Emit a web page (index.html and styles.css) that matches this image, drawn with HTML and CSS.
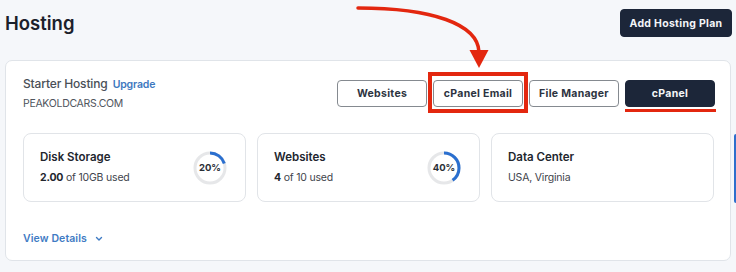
FILE: index.html
```html
<!DOCTYPE html>
<html lang="en">
<head>
<meta charset="utf-8">
<title>Hosting</title>
<link rel="stylesheet" href="styles.css">
</head>
<body>
<div class="page">
  <header class="header">
    <h1 class="title">Hosting</h1>
    <button class="btn btn-dark btn-add">Add Hosting Plan</button>
  </header>

  <section class="plan">
    <div class="plan-top">
      <div class="plan-info">
        <div class="plan-name">Starter Hosting <a class="upgrade" href="#">Upgrade</a></div>
        <div class="plan-domain">PEAKOLDCARS.COM</div>
      </div>
      <div class="actions">
        <button class="btn btn-outline">Websites</button>
        <button class="btn btn-outline highlighted">cPanel Email</button>
        <button class="btn btn-outline">File Manager</button>
        <button class="btn btn-dark underlined">cPanel</button>
      </div>
    </div>

    <div class="stats">
      <div class="stat">
        <div class="stat-text">
          <div class="stat-title">Disk Storage</div>
          <div class="stat-sub"><b>2.00</b> of 10GB used</div>
        </div>
        <div class="ring">
          <svg width="34" height="34" viewBox="0 0 34 34">
            <circle cx="17" cy="17" r="15" fill="none" stroke="#e6e7e9" stroke-width="3"/>
            <circle cx="17" cy="17" r="15" fill="none" stroke="#2a6fcf" stroke-width="3" stroke-dasharray="18.85 94.25" transform="rotate(-90 17 17)"/>
          </svg>
          <span class="ring-label">20%</span>
        </div>
      </div>
      <div class="stat">
        <div class="stat-text">
          <div class="stat-title">Websites</div>
          <div class="stat-sub"><b>4</b> of 10 used</div>
        </div>
        <div class="ring">
          <svg width="34" height="34" viewBox="0 0 34 34">
            <circle cx="17" cy="17" r="15" fill="none" stroke="#e6e7e9" stroke-width="3"/>
            <circle cx="17" cy="17" r="15" fill="none" stroke="#2a6fcf" stroke-width="3" stroke-dasharray="37.7 94.25" transform="rotate(-90 17 17)"/>
          </svg>
          <span class="ring-label">40%</span>
        </div>
      </div>
      <div class="stat">
        <div class="stat-text">
          <div class="stat-title">Data Center</div>
          <div class="stat-sub">USA, Virginia</div>
        </div>
      </div>
    </div>

    <a class="details" href="#">View Details
      <svg width="8" height="6" viewBox="0 0 8 6"><path d="M1.5 1.5 L4 4 L6.5 1.5" fill="none" stroke="#3f7bc4" stroke-width="1.4" stroke-linecap="round" stroke-linejoin="round"/></svg>
    </a>
  </section>
</div>

<svg class="arrow" width="736" height="80" viewBox="0 0 736 80">
  <path d="M358 8 C 432 8, 478 24, 479 52" fill="none" stroke="#e3270f" stroke-width="3.5" stroke-linecap="round"/>
  <polygon points="469.5,50 488.5,50 479,68" fill="#e3270f"/>
</svg>
<div class="peek"></div>
</body>
</html>
```

FILE: styles.css
```css
* { box-sizing: border-box; }

body {
  margin: 0;
  background: #f5f7fa;
  font-family: Inter, "Noto Sans", "Liberation Sans", sans-serif;
  color: #1d2330;
  width: 736px;
  height: 272px;
  overflow: hidden;
  position: relative;
}

.page {
  padding: 9px 4px 0 5px;
}

.header {
  display: flex;
  align-items: center;
  justify-content: space-between;
  height: 28px;
}

.title {
  margin: 0;
  font-size: 18.5px;
  font-weight: 600;
  color: #1b202b;
}

.btn {
  font-family: inherit;
  font-size: 10.5px;
  font-weight: 700;
  letter-spacing: 0.3px;
  border-radius: 4px;
  cursor: pointer;
  padding: 0;
}

.btn-add {
  width: 112px;
  height: 28px;
}

.btn-dark {
  background: #1c2639;
  color: #f3f5f8;
  border: 1px solid #1c2639;
}

.btn-outline {
  background: #fff;
  color: #2d3340;
  border: 1px solid #858a90;
}

.plan {
  margin-top: 23px;
  background: #fff;
  border: 1px solid #e0e4e9;
  border-radius: 7px;
  height: 201px;
  width: 726px;
  padding: 15px 15px 0 17px;
}

.plan-top {
  display: flex;
  justify-content: space-between;
  align-items: flex-start;
}

.plan-name {
  font-size: 12px;
  line-height: 16px;
  font-weight: 500;
  letter-spacing: -0.15px;
  color: #4a4f57;
}

.upgrade {
  margin-left: 2px;
  font-size: 10.5px;
  font-weight: 600;
  color: #3d78c0;
  text-decoration: none;
}

.plan-domain {
  margin-top: 3px;
  font-size: 10.5px;
  line-height: 16px;
  letter-spacing: -0.3px;
  color: #50555d;
}

.actions {
  display: flex;
  gap: 6px;
  margin-top: 4px;
}

.actions .btn {
  width: 90px;
  height: 27px;
  position: relative;
}

.highlighted::after {
  content: "";
  position: absolute;
  left: -6px;
  right: -6px;
  top: -9px;
  bottom: -7px;
  border: 4px solid #e3270f;
}

.underlined::after {
  content: "";
  position: absolute;
  left: -1px;
  right: -2px;
  bottom: -6px;
  height: 3px;
  background: #e3270f;
}

.stats {
  display: grid;
  grid-template-columns: repeat(3, 223px);
  gap: 11px;
  margin-top: 21px;
}

.stat {
  height: 69px;
  border: 1px solid #e1e4e8;
  border-radius: 8px;
  display: flex;
  align-items: center;
  justify-content: space-between;
  padding: 0 18px 0 16px;
}

.stat-title {
  font-size: 11.5px;
  line-height: 16px;
  font-weight: 600;
  color: #22262e;
}

.stat-sub {
  margin-top: 5px;
  font-size: 10.5px;
  line-height: 16px;
  letter-spacing: -0.2px;
  color: #3f444c;
}

.stat-sub b {
  font-weight: 700;
  color: #22262e;
}

.ring {
  position: relative;
  width: 34px;
  height: 34px;
  display: flex;
  align-items: center;
  justify-content: center;
}

.ring svg {
  position: absolute;
  inset: 0;
}

.ring-label {
  position: relative;
  font-size: 9.5px;
  font-weight: 700;
  color: #2a2e36;
}

.details {
  display: inline-flex;
  align-items: center;
  gap: 8px;
  margin-top: 29px;
  font-size: 10.5px;
  line-height: 16px;
  font-weight: 600;
  letter-spacing: 0.1px;
  color: #3f7bc4;
  text-decoration: none;
}

.arrow {
  position: absolute;
  left: 0;
  top: 0;
  pointer-events: none;
}

.peek {
  position: absolute;
  left: 734px;
  top: 134px;
  width: 3px;
  height: 69px;
  background: #2e6fcc;
  border-radius: 2px 0 0 2px;
}
```
